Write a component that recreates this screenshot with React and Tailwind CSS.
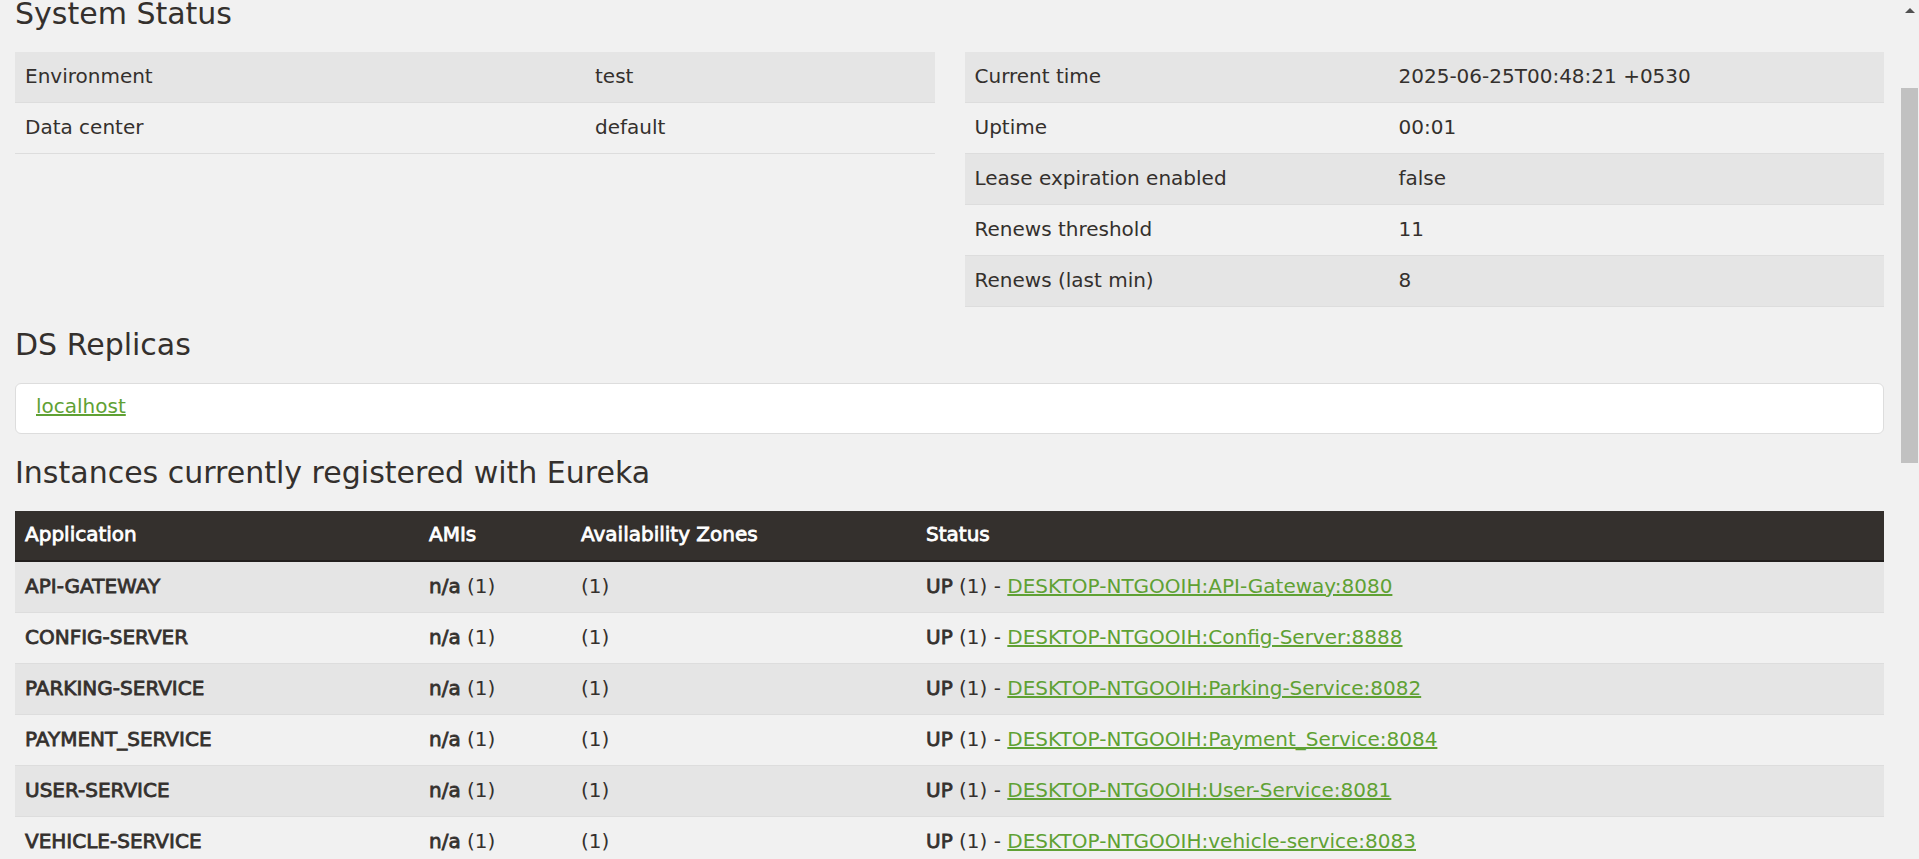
import React from "react";

const leftStatus = [
  ["Environment", "test"],
  ["Data center", "default"],
];

const rightStatus = [
  ["Current time", "2025-06-25T00:48:21 +0530"],
  ["Uptime", "00:01"],
  ["Lease expiration enabled", "false"],
  ["Renews threshold", "11"],
  ["Renews (last min)", "8"],
];

const apps = [
  ["API-GATEWAY", "DESKTOP-NTGOOIH:API-Gateway:8080"],
  ["CONFIG-SERVER", "DESKTOP-NTGOOIH:Config-Server:8888"],
  ["PARKING-SERVICE", "DESKTOP-NTGOOIH:Parking-Service:8082"],
  ["PAYMENT_SERVICE", "DESKTOP-NTGOOIH:Payment_Service:8084"],
  ["USER-SERVICE", "DESKTOP-NTGOOIH:User-Service:8081"],
  ["VEHICLE-SERVICE", "DESKTOP-NTGOOIH:vehicle-service:8083"],
];

const bold = "[-webkit-text-stroke:0.8px_currentColor]";

function StatusTable({ rows, cols }) {
  return (
    <div>
      {rows.map(([label, value], i) => (
        <div
          key={label}
          className={`grid ${cols} h-[51px] border-b border-[#dddddd] pt-[10px] ${
            i % 2 === 0 ? "bg-[#e5e5e5]" : ""
          }`}
        >
          <div className="px-[10px]">{label}</div>
          <div className="px-[10px]">{value}</div>
        </div>
      ))}
    </div>
  );
}

export default function App() {
  return (
    <div className="flex h-[859px] overflow-hidden bg-[#f1f1f1] font-['DejaVu_Sans',sans-serif] text-[20px] leading-[28px] text-[#34302d]">
      <div className="flex-1 pl-[15px] pr-[17px]">
        <h1 className="mb-[24px] text-[30px] leading-[28px]">System Status</h1>

        {/* status tables */}
        <div className="grid grid-cols-2 gap-[30px] items-start">
          <StatusTable rows={leftStatus} cols="grid-cols-[570px_1fr]" />
          <StatusTable rows={rightStatus} cols="grid-cols-[424px_1fr]" />
        </div>

        <h2 className="mt-[20px] mb-[20px] text-[30px] leading-[36px]">DS Replicas</h2>
        <div className="h-[51px] rounded-md border border-[#dddddd] bg-white pl-[20px] pt-[8px]">
          <a href="#" className="text-[#5fa134] underline">localhost</a>
        </div>

        <h2 className="mt-[21px] mb-[20px] text-[30px] leading-[36px]">
          Instances currently registered with Eureka
        </h2>

        {/* instances */}
        <div>
          <div className={`grid grid-cols-[404px_152px_345px_1fr] h-[51px] border-b-2 border-[#221f1d] bg-[#34302d] pt-[9px] text-white ${bold}`}>
            <div className="px-[10px]">Application</div>
            <div className="px-[10px]">AMIs</div>
            <div className="px-[10px]">Availability Zones</div>
            <div className="px-[10px]">Status</div>
          </div>
          {apps.map(([name, host], i) => (
            <div
              key={name}
              className={`grid grid-cols-[404px_152px_345px_1fr] h-[51px] border-b border-[#dddddd] pt-[10px] ${
                i % 2 === 0 ? "bg-[#e5e5e5]" : ""
              }`}
            >
              <div className={`px-[10px] ${bold}`}>{name}</div>
              <div className="px-[10px]">
                <b className={`font-normal ${bold}`}>n/a</b> (1)
              </div>
              <div className="px-[10px]">(1)</div>
              <div className="px-[10px] whitespace-nowrap">
                <b className={`font-normal ${bold}`}>UP</b> (1) -{" "}
                <a href="#" className="text-[#5fa134] underline">{host}</a>
              </div>
            </div>
          ))}
        </div>
      </div>

      {/* scrollbar */}
      <div className="flex w-[18px] flex-col bg-[#f1f1f1]">
        <div className="mt-[8px] ml-[4px] h-0 w-0 border-x-[5px] border-b-[5px] border-x-transparent border-b-[#505050]" />
        <div className="mt-[75px] h-[375px] w-[17px] bg-[#c1c1c1]" />
      </div>
    </div>
  );
}
